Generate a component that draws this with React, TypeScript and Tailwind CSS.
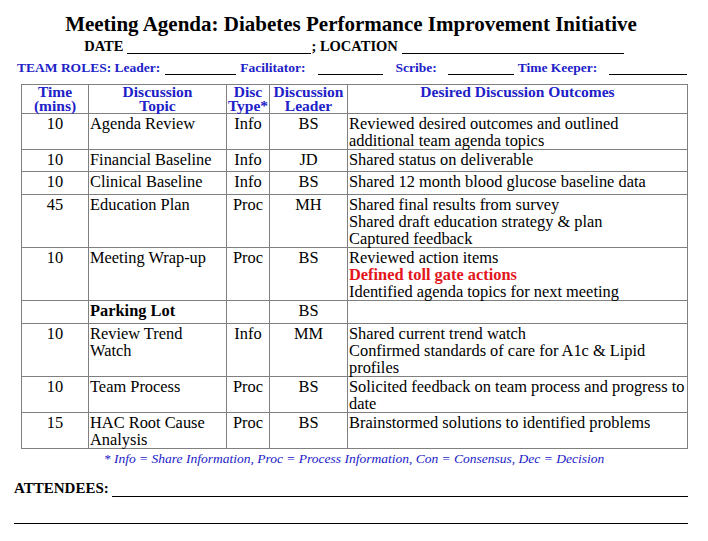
const rows = [
  { time: '10', topic: ['Agenda Review'], type: 'Info', leader: 'BS', h: 'h-[36px]', out: [['Reviewed desired outcomes and outlined'], ['additional team agenda topics']] },
  { time: '10', topic: ['Financial Baseline'], type: 'Info', leader: 'JD', h: 'h-[22px]', out: [['Shared status on deliverable']] },
  { time: '10', topic: ['Clinical Baseline'], type: 'Info', leader: 'BS', h: 'h-[23px]', out: [['Shared 12 month blood glucose baseline data']] },
  { time: '45', topic: ['Education Plan'], type: 'Proc', leader: 'MH', h: 'h-[53px]', out: [['Shared final results from survey'], ['Shared draft education strategy & plan'], ['Captured feedback']] },
  { time: '10', topic: ['Meeting Wrap-up'], type: 'Proc', leader: 'BS', h: 'h-[53px]', out: [['Reviewed action items'], ['Defined toll gate actions', 'red'], ['Identified agenda topics for next meeting']] },
  { time: '', topic: ['Parking Lot'], type: '', leader: 'BS', h: 'h-[23px]', out: [], bold: true },
  { time: '10', topic: ['Review Trend', 'Watch'], type: 'Info', leader: 'MM', h: 'h-[53px]', out: [['Shared current trend watch'], ['Confirmed standards of care for A1c & Lipid'], ['profiles']] },
  { time: '10', topic: ['Team Process'], type: 'Proc', leader: 'BS', h: 'h-[35px]', out: [['Solicited feedback on team process and progress to'], ['date']] },
  { time: '15', topic: ['HAC Root Cause', 'Analysis'], type: 'Proc', leader: 'BS', h: 'h-[36px]', out: [['Brainstormed solutions to identified problems']] },
];

const Blank = ({ w }: { w: string }) => (
  <span className={`inline-block ${w} h-[14px] border-b border-black`} />
);

const App = () => {
  const cell = 'border border-[#808080] align-top px-px pt-[1px] pb-0';
  const head = 'border border-[#808080] align-top text-center font-bold text-[#2121c8] text-[15.5px] leading-[14px] pt-0 pb-0';

  return (
    <div className="w-[708px] min-h-[541px] bg-white text-black font-['Liberation_Serif',serif]">
      <h1 className="pt-[12px] pr-[6px] text-center font-bold text-[21px] leading-[24px]">
        Meeting Agenda: Diabetes Performance Improvement Initiative
      </h1>

      <div className="mt-[2px] flex items-end justify-center font-bold text-[14.5px] leading-[16px]">
        <span>DATE</span>
        <Blank w="ml-[4px] w-[184px]" />
        <span>; LOCATION</span>
        <Blank w="ml-[4px] w-[222px]" />
      </div>

      <div className="mt-[6px] flex items-end pl-[17px] font-bold text-[13.5px] leading-[15px] text-[#2121c8]">
        <span>TEAM ROLES: Leader:</span>
        <Blank w="ml-[5px] w-[71px] border-[#2121c8]" />
        <span className="ml-[4px]">Facilitator:</span>
        <Blank w="ml-[13px] w-[65px] border-[#2121c8]" />
        <span className="ml-[12px]">Scribe:</span>
        <Blank w="ml-[11px] w-[66px] border-[#2121c8]" />
        <span className="ml-[4px]">Time Keeper:</span>
        <Blank w="ml-[12px] w-[78px] border-[#2121c8]" />
      </div>

      <table className="mt-[9px] ml-[21px] w-[667px] border-collapse text-[16.4px] leading-[17px]">
        <colgroup>
          <col className="w-[67px]" />
          <col className="w-[138px]" />
          <col className="w-[43px]" />
          <col className="w-[78px]" />
          <col />
        </colgroup>
        <thead>
          <tr className="h-[28px]">
            <th className={head}>Time<br />(mins)</th>
            <th className={head}>Discussion<br />Topic</th>
            <th className={head}>Disc<br />Type*</th>
            <th className={head}>Discussion<br />Leader</th>
            <th className={head}>Desired Discussion Outcomes</th>
          </tr>
        </thead>
        <tbody>
          {rows.map((r, i) => (
            <tr key={i} className={r.h}>
              <td className={`${cell} text-center`}>{r.time}</td>
              <td className={`${cell} ${r.bold ? 'font-bold' : ''}`}>
                {r.topic.map((t, j) => (
                  <div key={j}>{t}</div>
                ))}
              </td>
              <td className={`${cell} text-center`}>{r.type}</td>
              <td className={`${cell} text-center`}>{r.leader}</td>
              <td className={cell}>
                {r.out.map(([t, c], j) => (
                  <div key={j} className={c ? 'font-bold text-[#e3141c]' : ''}>
                    {t}
                  </div>
                ))}
              </td>
            </tr>
          ))}
        </tbody>
      </table>

      <p className="mt-[2px] text-center italic text-[13.5px] leading-[16px] text-[#2121c8]">
        * Info = Share Information, Proc = Process Information, Con = Consensus, Dec = Decision
      </p>

      <div className="mt-[13px] flex items-end pl-[14px] font-bold text-[15px] leading-[17px]">
        <span>ATTENDEES:</span>
        <Blank w="ml-[3px] w-[576px]" />
      </div>
      <div className="ml-[14px] mt-[26px] w-[674px] border-b border-black" />
    </div>
  );
};

export default App;
